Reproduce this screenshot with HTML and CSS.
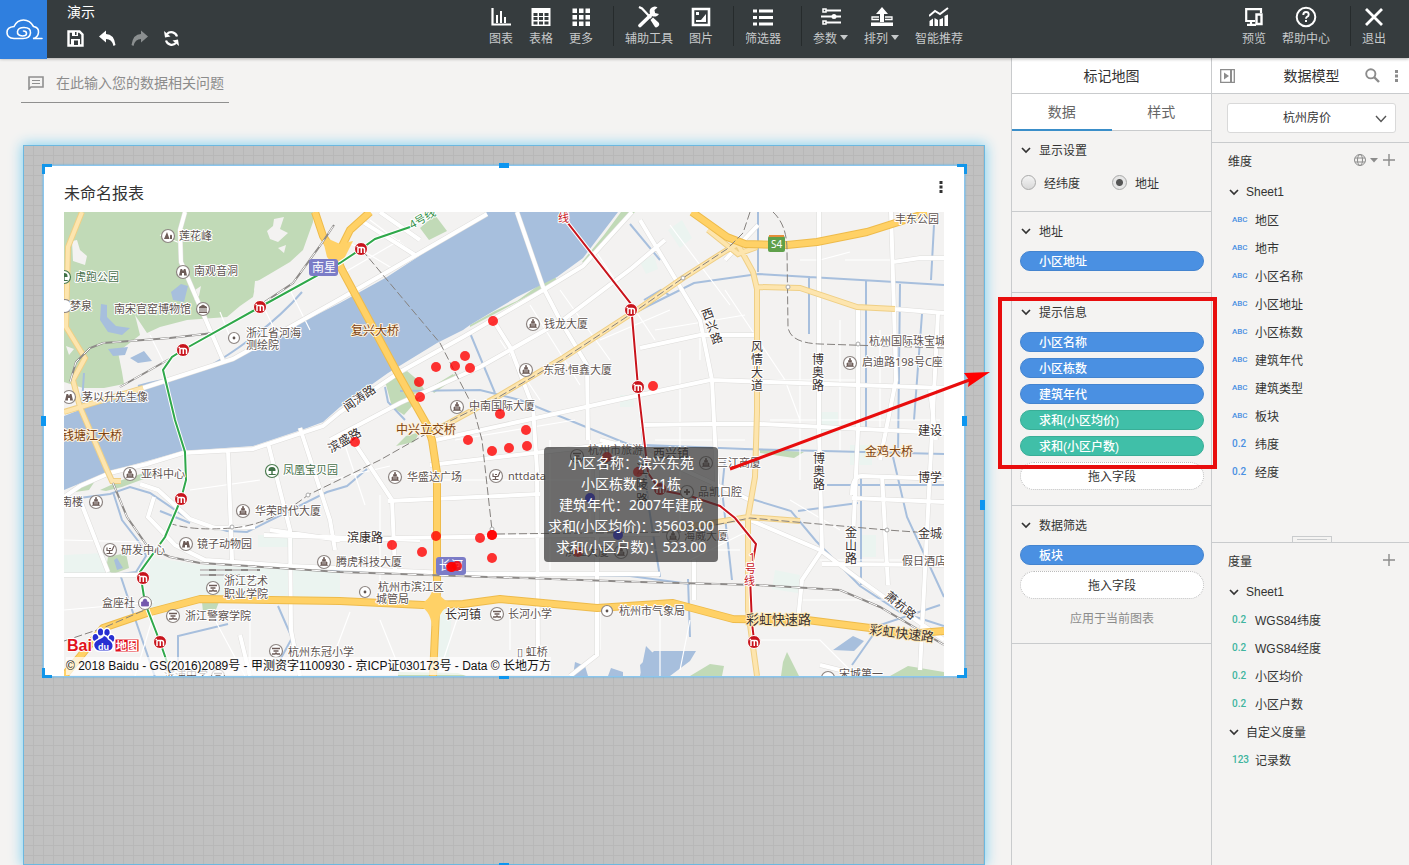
FILE: index.html
```
<!DOCTYPE html>
<html lang="zh-CN">
<head>
	<meta charset="utf-8">
	<title>演示</title>
	<link rel="stylesheet" href="styles.css">
</head>
<body>

<!-- shared icons -->
<svg class="defs" width="0" height="0">
	<symbol id="chev" viewBox="0 0 10 10"><path d="M1 3l4 4 4-4" fill="none" stroke="currentColor" stroke-width="1.7"/></symbol>
	<symbol id="plus" viewBox="0 0 12 12"><path d="M6 0v12M0 6h12" fill="none" stroke="currentColor" stroke-width="1.4"/></symbol>
	<symbol id="metro" viewBox="-7 -7 14 14"><circle r="6.5" fill="#c8141c" stroke="#fff"/><path d="M-3 4V-1.500M-3 -1.500h4.500q2 0 2 2V4M0.300 -1V4M-4.500 -2.500h1.500" fill="none" stroke="#fff" stroke-width="1.500"/></symbol>
	<symbol id="poi" viewBox="-8 -8 16 16"><circle r="6.500" fill="#fff" stroke="#8d8582" stroke-width="1.200"/></symbol>
	<symbol id="tower" viewBox="-8 -8 16 16"><use href="#poi" x="-8" y="-8" width="16" height="16"/><path d="M-4 3.500h8M-3 3V0h1.500v-2.500H-.500V-4.500h1v2h1V0H3v3z" fill="#6d5c58" stroke="#6d5c58" stroke-width=".7"/><path d="M-1 -1v3.500M1 -1v3.500" stroke="#fff" stroke-width=".6"/></symbol>
	<symbol id="school" viewBox="-8 -8 16 16"><use href="#poi" x="-8" y="-8" width="16" height="16"/><path d="M-4 -2.500h8M-2.500 0h5M-4 3h3l1-1 1 1h3" fill="none" stroke="#6d5c58" stroke-width="1.400"/></symbol>
	<symbol id="office" viewBox="-8 -8 16 16"><use href="#poi" x="-8" y="-8" width="16" height="16"/><path d="M-3 -2.500v3h5l2-4.500M-.500 .500v3M-3.500 3.500h6M-1 -1.500h2" fill="none" stroke="#6d5c58" stroke-width="1.200"/></symbol>
	<symbol id="museum" viewBox="-8 -8 16 16"><use href="#poi" x="-8" y="-8" width="16" height="16"/><path d="M-4 -1.500L0 -4l4 2.500zM-4 3.500h8M-3 -1v4M-1 -1v4M1 -1v4M3 -1v4" fill="#6d5c58" stroke="#6d5c58"/></symbol>
	<symbol id="spot" viewBox="-8 -8 16 16"><circle r="5.500" fill="#fff" stroke="#8d8582" stroke-width="1.200"/><circle r="1.400" fill="#5f5450"/></symbol>
	<symbol id="sight" viewBox="-8 -8 16 16"><use href="#poi" x="-8" y="-8" width="16" height="16"/><path d="M-4 3.500L-2.500 -3h1.500l1 2 1-2h1.500L4 3.500H1V1h-2v2.500z" fill="#6d5c58"/></symbol>
	<symbol id="hill" viewBox="-8 -8 16 16"><use href="#poi" x="-8" y="-8" width="16" height="16"/><path d="M-4 3L-1 -4 1.500 3zM2 3V-.500l1-1 1 1V3z" fill="#6d5c58"/></symbol>
	<symbol id="tree" viewBox="-8 -8 16 16"><circle r="6.500" fill="#fff" stroke="#4c7c50" stroke-width="1.200"/><path d="M-3.500 0Q-4 -4 0 -4T3.500 0zM-.700 0h1.400v3h3v1h-7v-1h2.600z" fill="#3f7046"/></symbol>
</svg>

<header class="topbar">
	<div class="brand">
		<a class="logo" href="#" aria-label="首页">
			<svg width="40" height="24" viewBox="0 0 40 24" fill="none" stroke="#fff" stroke-width="1.600" stroke-linecap="round">
				<path d="M38 20.500H29q5-1 5.500-6T29.500 8.500Q26 2 19.500 2T10 8.500Q3 9 3 14.500t7 6h9q7 0 7.500-5.500T20 9.500q-6 0-6.500 4t5 4.500q4 0 4-2.500t-3-2.500"/>
			</svg>
		</a>
		<div class="doc">
			<h1>演示</h1>
			<div class="doc-tools">
				<button type="button" aria-label="保存"><svg width="17" height="17" viewBox="0 0 17 17"><path d="M1.500 1.500h11l3 3v11h-14z" fill="none" stroke="#fff" stroke-width="2.400"/><path d="M4 9h9v7H4zM5 1h6v5H5z" fill="#fff"/><path d="M7 10.500h4V15H7zM8 2h1.500v3H8z" fill="#363c3e"/></svg></button>
				<button type="button" aria-label="撤销"><svg width="17" height="17" viewBox="0 0 17 17"><path d="M0 6.500L7 .500V4q8 0 9.500 11l-2 1Q13 9 7 9v3.500z" fill="#fff"/></svg></button>
				<button type="button" aria-label="重做"><svg width="17" height="17" viewBox="0 0 17 17"><path d="M17 6.500L10 .500V4Q2 4 .500 15l2 1Q4 9 10 9v3.500z" fill="#8b8f90"/></svg></button>
				<button type="button" aria-label="刷新"><svg width="17" height="17" viewBox="0 0 17 17"><path d="M3 10.500A6 6 0 0 0 13 13M14 6.500A6 6 0 0 0 4 4" fill="none" stroke="#fff" stroke-width="2.200"/><path d="M1 1l1 6.500 5.500-1zM16 16l-1-6.500-5.500 1z" fill="#fff"/></svg></button>
			</div>
		</div>
	</div>

	<nav class="tools">
		<div class="tool-group">
			<button type="button"><svg width="20" height="20" viewBox="0 0 20 20"><path d="M1.500 1v16.500H20" fill="none" stroke="#fff" stroke-width="2.200"/><path d="M5 8h2v8H5zM9 4h2v12H9zM13 10h2v6h-2z" fill="#fff"/></svg><span>图表</span></button>
			<button type="button"><svg width="20" height="20" viewBox="0 0 20 20"><path d="M.500 1h19v18H.500z" fill="#fff"/><path d="M2.500 6h4v3h-4zM8 6h4v3H8zM13.500 6h4v3h-4zM2.500 10h4v3h-4zM8 10h4v3H8zM13.500 10h4v3h-4zM2.500 14.500h4v3h-4zM8 14.500h4v3H8zM13.500 14.500h4v3h-4z" fill="#363c3e"/></svg><span>表格</span></button>
			<button type="button"><svg width="20" height="20" viewBox="0 0 20 20"><path d="M1.500 1.500h4.500v4.500h-4.500zM8 1.500h4.500v4.500H8zM14.500 1.500h4.500v4.500h-4.500zM1.500 8h4.500v4.500h-4.500zM8 8h4.500v4.500H8zM14.500 8h4.500v4.500h-4.500zM1.500 14.500h4.500v4.500h-4.500zM8 14.500h4.500v4.500H8zM14.500 14.500h4.500v4.500h-4.500z" fill="#fff"/></svg><span>更多</span></button>
		</div>
		<div class="tool-group">
			<button type="button"><svg width="24" height="22" viewBox="0 0 24 22"><path d="M3 19.500L16 7" stroke="#fff" stroke-width="3.600" stroke-linecap="round"/><path d="M20.500 1.500A5 5 0 1 0 22 8l-4-1-.500-3z" fill="#fff"/><path d="M2 1l3 1.500L14 12" fill="none" stroke="#fff" stroke-width="2.200"/><path d="M13.500 14l2.500-2.500 6 5.500q1 2-1 3.500t-3 .500z" fill="#fff"/></svg><span>辅助工具</span></button>
			<button type="button"><svg width="20" height="20" viewBox="0 0 20 20"><path d="M2 2h16v16H2z" fill="none" stroke="#fff" stroke-width="2.600"/><path d="M5 5h3v3H5zM5 15v-2h5l5-6v8z" fill="#fff"/></svg><span>图片</span></button>
		</div>
		<div class="tool-group">
			<button type="button"><svg width="20" height="20" viewBox="0 0 20 20"><path d="M0 4h4M6 4h14M0 10.500h4M6 10.500h14M0 17h4M6 17h14" stroke="#fff" stroke-width="3.200"/></svg><span>筛选器</span></button>
		</div>
		<div class="tool-group">
			<button type="button"><svg width="20" height="20" viewBox="0 0 20 20"><path d="M5 3.500h15M0 9.500h20M5 15.500h15" stroke="#fff" stroke-width="1.800"/><path d="M2 2h3v3H2zM2 14h3v3H2z" fill="#363c3e" stroke="#fff" stroke-width="1.500"/><circle cx="13" cy="9.500" r="2.500" fill="#fff"/></svg><span class="has-caret">参数</span></button>
			<button type="button"><svg width="22" height="20" viewBox="0 0 22 20"><path d="M11 0l6 7h-4v8H9V7H5zM0 15.500h22V19H0z" fill="#fff"/><path d="M8 10H1v2.500h7M14 10h7v2.500h-7" fill="none" stroke="#fff" stroke-width="1.300"/></svg><span class="has-caret">排列</span></button>
			<button type="button"><svg width="20" height="20" viewBox="0 0 20 20"><path d="M.500 19v-5L4 11.500V19zM5.500 19v-8l3.500 2v6zM10.500 19v-6.500L14 11v8zM15.500 19V9L19 7.500V19z" fill="#fff"/><path d="M0 9l6-5 5 3 8-6" fill="none" stroke="#fff" stroke-width="2"/></svg><span>智能推荐</span></button>
		</div>
	</nav>

	<div class="tools tools-right">
		<div class="tool-group">
			<button type="button"><svg width="20" height="20" viewBox="0 0 20 20"><path d="M17 6V2.200H2.200V14H11M7 14v3.500M3 17.800h9" fill="none" stroke="#fff" stroke-width="2.200"/><path d="M12.500 7.500h5v9.500h-5z" fill="none" stroke="#fff" stroke-width="2.400"/></svg><span>预览</span></button>
			<button type="button"><svg width="22" height="22" viewBox="0 0 22 22"><circle cx="11" cy="11" r="9.300" fill="none" stroke="#fff" stroke-width="2"/><path d="M8.300 9q0-3 2.700-3t2.700 2.400q0 1.600-1.700 2.400-1 .600-1 2" fill="none" stroke="#fff" stroke-width="1.900"/><path d="M10 14h2v2h-2z" fill="#fff"/></svg><span>帮助中心</span></button>
		</div>
		<div class="tool-group">
			<button type="button"><svg width="20" height="20" viewBox="0 0 20 20"><path d="M2 2l16 16M18 2L2 18" stroke="#fff" stroke-width="2.800"/></svg><span>退出</span></button>
		</div>
	</div>
</header>

<div class="workspace">
	<main class="stage">
		<label class="ask">
			<svg width="16" height="14" viewBox="0 0 16 14"><path d="M1 13V1h14v10H3z" fill="none" stroke="#8f8f8f" stroke-width="1.600"/><path d="M4 4.500h8M4 7.500h8" stroke="#8f8f8f" stroke-width="1.200"/></svg>
			<input type="text" placeholder="在此输入您的数据相关问题" aria-label="问题">
		</label>

		<section class="canvas">
			<i class="knob knob-right"></i><i class="knob knob-bottom"></i>
			<article class="card">
				<i class="corner tl"></i><i class="corner tr"></i><i class="corner bl"></i><i class="corner br"></i>
				<i class="knob knob-top"></i><i class="knob knob-right"></i><i class="knob knob-bottom"></i><i class="knob knob-left"></i>
				<div class="card-head">
					<h2>未命名报表</h2>
					<button type="button" class="dots" aria-label="更多操作"><svg width="4" height="12" viewBox="0 0 4 12"><path d="M.500 0h3v3h-3zM.500 4.500h3v3h-3zM.500 9h3v3h-3z" fill="#333"/></svg></button>
				</div>
				<div class="map">
					<svg class="map-svg" viewBox="64 212 880 464" preserveAspectRatio="xMidYMid slice">
						<rect x="64" y="212" width="880" height="464" fill="#f3f2f1"/>

						<!-- pale blocks -->
						<g fill="#ebf4f0">
							<path d="M150 557l50 8 140 7v28H200l-50 8zM64 555l40-2 8 20H64zM258 535h35v12h-35zM440 608h12l-4 60h-14zM668 230l14-10 10 18-12 10zM640 262l14-7 4 14-12 5zM775 570l25 5-2 18-26-4zM818 412h20v22h-20zM862 535h14v22h-14zM620 395h14v12h-14zM850 445h22v20h-22z"/>
						</g>

						<!-- parks -->
						<g fill="#c1dab7">
							<path d="M64 212H313V222L303 250 290 262 268 275 256 282 253 297 240 306 227 317 187 320 160 327 147 333 135 315 140 335 118 352 122 372 124 384 104 388 83 388 64 382z"/>
							<path d="M470 325l25-14 22-10 26-19 12-5 3 5-28 13-60 32zM582 262l22-27 17-23h14l-20 20-28 33zM385 381l22-10 12 10 6 10 28-17 2 6-33 15-18 20-12-8z"/>
							<path d="M100 490l22-10 28-9 10 2-38 14-16 4zM75 492l6-8 14-3-6 9zM106 569l2-12 18-4 3 15-16 6zM202 602h17l-4 10h-12zM396 446l10-10 14-4-6 10zM430 388l25-14 1 4-22 15zM690 676l20-12 14 2-2 10zM783 662l4-10 12 24h-18zM890 676l18-10 36 6v4zM398 672l60 1 8 3h-68zM420 228l15-13 12 16-18 9zM760 449l44 3-10 6-34-5z"/>
						</g>
						<g fill="#f3f2f1">
							<path d="M72 241l5-1 3 10 7 6-2 9-12-4zM274 219l10-2-4 12 8 4-10 9-8-3-3-8 6-5zM278 248l8-3-2 8zM255 281l9-1-4 8-6 3zM195 290l6-4-2 10-5 4zM120 355l22-4-4 14 10 20-22 3zM66 346l8 3-5 6z"/>
						</g>

						<!-- water -->
						<g fill="#a7bfdd">
							<path d="M64 416L100 402 143 389 233 361 300 323 340 303 387 277 487 212H618L583 258 557 277 517 297 470 325 463 330 437 343 388 373 340 407 323 422 307 428 253 446 183 451 147 461 110 471 64 490z"/>
							<path d="M171 292l10-8 7 2-4 16-11-2zM101 304l6 1v12l9 9 14 2-8 7-14-3-8-12zM108 349l20-2-3 8-12 1zM130 358l14-7 8 10-14 2zM114 560l3-2 6 10-6 2z"/>
							<path d="M640 665l14-14 42 0-6 10-20 15h-29zM833 650l20-14 11 5-10 10zM573 676l2-14 10 4 3 10zM608 676l3-8 12 4v4zM640 676l6-30 14 14 8 16z"/>
						</g>
						<g fill="none" stroke="#a7bfdd" stroke-width="2">
							<path d="M64 500l46-6 20-7 20 6 40 27 37 11 20 1 32-16 48-24 20-6 20-17M113 492l9 28 20 26 4 10-10 16-16 2 10 30 26 76M82 403l2-30"/>
							<path d="M138 386q20-6 40-8t60-30 64-56M470 333l25 60M400 391l80-1 40 10 110 45 50 2M385 387l3 15 17 18M644 300l17-10 8 5M660 260l-30-36M640 310l54-27 64-9 120 7 66 4M758 212v60M809 276v58M866 281v150M900 284l-2 170M934 225l-3 55M922 314l-8 106M645 445l100 4 199 5M745 497l46 14 25 30 44 45 40 26 44 14M725 460l-3 30 10 90M640 407l8 95 12 75M688 579l2 58M940 605l-60 20-28 40M798 511l60-8M827 485h117M861 475v110M893 457l14 60 37 80M330 570l300 6 60 8M278 606l14 32-12 22M178 676v-40l50-12M190 523l-30-12"/>
						</g>

						<!-- minor streets -->
						<g fill="none" stroke="#fff" stroke-width="1.200">
							<path d="M64 540l80 2M190 490l70-10M155 610l-20 66M215 620l30 56M64 610l90-8M250 610v66M330 480l60-14M345 445l20 60M380 495v100M415 480h220M550 440v130M590 440v100M455 440l120-20M660 600v76M600 610v40M500 340l40 60M530 305l50 80M560 290l50 70M600 340l70-30M595 250l60 90M650 240l40 60M670 225l60 80M680 350v170M700 310v50M655 330l90-15M655 440h90M770 380h90M800 340v120M770 420h170M840 320v130M880 330v100M820 560h110M800 600h100M790 500l50 30M760 640h60l30 30M690 560l60-30M640 550h100M690 620l-10 50M845 260h100M800 260h20l30-8M725 290l60 90 15 40v60"/>
							<path d="M260 300l15 30M290 290l20 40M220 312l10 25M340 275l60-35M345 240l50 30M370 220l40 30M150 335l15 30M160 235l20 8M380 620l20 50M460 610l-20 60M510 610v40M350 612l-15 40"/>
						</g>

						<!-- white roads -->
						<g class="road-edge">
							<path id="roads" d="M185 212L180 230 181 262 223 360M140 389L233 359 340 299 387 272 487 214M64 497L80 486 110 473 147 464 183 453 253 449 323 426 340 412 400 372 463 337 540 292 583 266 612 234 632 212M330 440L400 403 480 367 563 320 632 268 665 240M517 212L543 287 560 320 587 365 588 440M495 323L510 347 533 407 537 470 538 660M140 484L158 490 190 519 215 528 255 527M300 428L330 520 335 550M228 450L232 560M268 443L290 530 291 630 300 676M154 497L148 517 175 545 205 560 290 566 470 574 660 574M64 575L145 575M80 500L108 572M346 430L392 500 395 570M330 539L660 534M388 501L540 494M430 465L620 443M436 440L640 395 710 380 944 388M640 348L700 335 757 335M597 470V610L597 655 570 676M640 220L700 320 712 380 718 500M758 225L725 260M819 212V430L822 550 802 580 798 620M891 212L894 310 896 380 880 460M858 310V430L853 540M893 262L920 258H944M895 309L944 313M938 313L920 670M750 500L640 450 600 440M750 520L820 550 860 580 944 640M640 425L710 424 760 424 944 433M694 560V600M852 495Q852 476 862 476L944 479M852 498L944 502M882 475L888 585M936 440L930 390M822 564L944 565M380 212L420 240M360 220L415 255M270 530L340 540M264 535L420 540M820 665L860 675M240 635L250 676"/>
						</g>
						<use href="#roads" class="road-white"/>

						<!-- light yellow roads -->
						<g fill="none" stroke="#efcf85" stroke-width="6">
							<path id="lights" d="M82 212L68 247 66 327 85 358 73 380 80 407 107 470 112 481H121M64 412L143 388M440 428L497 397 563 358 640 308 683 278 727 250 740 243M737 243L753 272 757 289V412L755 477 748 517V610L757 676M757 287L800 288 857 307 895 309M680 528L748 517 800 521M708 230L738 254 757 247"/>
						</g>
						<use href="#lights" fill="none" stroke="#fde5ae" stroke-width="4"/>

						<!-- expressways -->
						<g fill="none" stroke="#eebb4b" stroke-width="8" stroke-linejoin="round">
							<path id="yellows" d="M315 212L323 236 336 256 342 270 397 372 427 425 432 440 437 473V590L433 676M370 212L350 230 340 250M64 676L83 653 103 628 147 613 200 599 340 601 423 605 463 604 500 599 597 608 673 603 733 619 807 620 870 628 907 634 944 631M692 212L727 237 745 244 787 245 817 242 867 232 927 213"/>
						</g>
						<use href="#yellows" fill="none" stroke="#ffd166" stroke-width="6" stroke-linejoin="round"/>
						<path d="M322 236l18 8 13-3-8 16-8 12-10-12zM437 588q2 12 18 16-15 2-18 22h-5q-2-18-16-21 14-3 17-17z" fill="#ffd166"/>

						<!-- railways -->
						<g fill="none" stroke="#8d8a88" stroke-width="2">
							<path id="rails" d="M113 483L127 517 148 547 170 557 200 563 340 572 640 582 757 585 840 590 880 607 944 645M70 382L76 362 90 348 103 343 170 338 213 333 250 312 293 283 322 243 334 225M120 387L173 357M200 570H260M200 575H240"/>
						</g>
						<use href="#rails" fill="none" stroke="#fff" stroke-width="1" stroke-dasharray="9 7"/>
						<g fill="none" stroke="#85817e" stroke-width="1" stroke-dasharray="8 3">
							<path d="M362 250L440 343 473 407 482 440 492 530M497 534L680 532 750 518 887 530 944 534M750 212L743 233 727 249 683 278 640 308 563 359 497 398 440 426 380 460 308 495Q270 525 232 528T172 524M773 212Q787 225 787 250L788 327Q790 343 820 344L944 348M64 641L103 628 147 609"/>
						</g>
						<g fill="#fff" stroke="#aaa"><circle cx="308" cy="495" r="2"/><circle cx="232" cy="527" r="2"/><circle cx="683" cy="278" r="2"/><circle cx="788" cy="287" r="2"/><circle cx="858" cy="344" r="2"/><circle cx="887" cy="530" r="2"/><circle cx="492" cy="529" r="2"/></g>

						<!-- metro lines -->
						<g fill="none" stroke="#fff" stroke-width="4">
							<path id="line4" d="M413 226L375 239 361 249 340 263 260 307 183 350 172 357 163 370 175 420 185 452 186 480 181 499 165 537 140 572 145 603 160 642 167 662"/>
							<path id="line1" d="M560 213L631 304 638 387 645 447 648 473 660 490 690 496 720 506 735 518 756 544 750 577 752 623 754 640"/>
						</g>
						<use href="#line4" fill="none" stroke="#2fa84a" stroke-width="2"/>
						<use href="#line1" fill="none" stroke="#c8141c" stroke-width="2"/>
						<g>
							<use href="#metro" x="354" y="242" width="14" height="14"/><use href="#metro" x="253" y="300" width="14" height="14"/><use href="#metro" x="176" y="343" width="14" height="14"/><use href="#metro" x="174" y="492" width="14" height="14"/><use href="#metro" x="136" y="571" width="14" height="14"/><use href="#metro" x="153" y="635" width="14" height="14"/><use href="#metro" x="624" y="303" width="14" height="14"/><use href="#metro" x="631" y="380" width="14" height="14"/><use href="#metro" x="653" y="482" width="14" height="14"/><use href="#metro" x="747" y="635" width="14" height="14"/>
						</g>

						<!-- place icons -->
						<g>
							<use href="#hill" x="160" y="228" width="16" height="16"/><use href="#sight" x="175" y="264" width="16" height="16"/><use href="#tree" x="56" y="269" width="16" height="16"/><use href="#poi" x="57" y="298" width="16" height="16"/><use href="#museum" x="195" y="301" width="16" height="16"/><use href="#spot" x="226" y="330" width="16" height="16"/><use href="#sight" x="61" y="389" width="16" height="16"/>
							<use href="#tower" x="122" y="466" width="16" height="16"/><use href="#tower" x="88" y="494" width="16" height="16"/><use href="#tree" x="264" y="463" width="16" height="16"/><use href="#tower" x="235" y="503" width="16" height="16"/><use href="#sight" x="178" y="536" width="16" height="16"/><use href="#office" x="102" y="542" width="16" height="16"/><use href="#school" x="205" y="580" width="16" height="16"/><use href="#school" x="165" y="608" width="16" height="16"/><use href="#school" x="268" y="643" width="16" height="16"/>
							<use href="#tower" x="316" y="554" width="16" height="16"/><use href="#spot" x="357" y="584" width="16" height="16"/><use href="#tower" x="387" y="469" width="16" height="16"/><use href="#office" x="488" y="468" width="16" height="16"/><use href="#tower" x="449" y="399" width="16" height="16"/><use href="#tower" x="518" y="362" width="16" height="16"/><use href="#tower" x="525" y="316" width="16" height="16"/><use href="#school" x="489" y="606" width="16" height="16"/><use href="#spot" x="599" y="603" width="16" height="16"/>
							<use href="#tower" x="842" y="355" width="16" height="16"/><use href="#tower" x="698" y="455" width="16" height="16"/><use href="#school" x="569" y="448" width="16" height="16"/><use href="#poi" x="679" y="484" width="16" height="16"/><path d="M687 489v6M684 492h6" stroke="#6d5c58" stroke-width="2"/><use href="#tower" x="665" y="528" width="16" height="16"/><use href="#tower" x="613" y="544" width="16" height="16"/><use href="#school" x="210" y="668" width="16" height="16"/><use href="#poi" x="820" y="670" width="16" height="16"/>
							<circle cx="145" cy="603" r="6.500" fill="#fff" stroke="#8d8582"/><path d="M141.500 602h7v4h-7zM143 602q0-3 2-3t2 3" fill="#7459ad" stroke="#7459ad" stroke-width=".8"/>
						</g>

						<!-- place names -->
						<g class="place">
							<text x="179" y="240">莲花峰</text>
							<text x="194" y="275">南观音洞</text>
							<text x="75" y="281" class="green">虎跑公园</text>
							<text x="70" y="310">梦泉</text>
							<text x="114" y="313">南宋官窑博物馆</text>
							<text x="246" y="337">浙江省河海</text><text x="246" y="349">测绘院</text>
							<text x="82" y="401">茅以升先生像</text>
							<text x="141" y="478">亚科中心</text>
							<text x="61" y="506">南楼</text>
							<text x="283" y="474" class="green">凤凰宝贝园</text>
							<text x="255" y="515">华荣时代大厦</text>
							<text x="197" y="548">镜子动物园</text>
							<text x="121" y="554">研发中心</text>
							<text x="224" y="585">浙江艺术</text><text x="224" y="598">职业学院</text>
							<text x="102" y="607">盒座社</text>
							<text x="185" y="620">浙江警察学院</text>
							<text x="288" y="656">杭州东冠小学</text>
							<text x="164" y="679">滨浦中学</text>
							<text x="336" y="566">腾虎科技大厦</text>
							<text x="378" y="591">杭州市滨江区</text><text x="376" y="603">城管局</text>
							<text x="407" y="481">华盛达广场</text>
							<text x="508" y="480">nttdata</text>
							<text x="469" y="410">中南国际大厦</text>
							<text x="543" y="374">东冠·恒鑫大厦</text>
							<text x="544" y="328">钱龙大厦</text>
							<text x="508" y="618">长河小学</text>
							<text x="517" y="656">▯ 虹桥</text>
							<text x="619" y="615">杭州市气象局</text>
							<text x="895" y="223">丰东公园</text>
							<text x="869" y="345">杭州国际珠宝城</text>
							<text x="862" y="366">启迪路198号C座</text>
							<text x="717" y="467">三江商厦</text>
							<text x="698" y="496">品凯口腔</text>
							<text x="684" y="540">海威大厦</text>
							<text x="588" y="454">杭州市旅游</text><text x="600" y="467">学校</text>
							<text x="565" y="556">滨江大厦</text>
							<text x="902" y="565">假日酒店</text>
							<text x="839" y="678">宋城第一</text>
						</g>
						<g class="road-name">
							<text x="918" y="435">建设</text>
							<text x="918" y="482">博学</text>
							<text x="918" y="538">金城</text>
							<text x="347" y="542">滨康路</text>
							<text x="445" y="619">长河镇</text>
							<text x="653" y="458">西兴镇</text>
							<text x="347" y="412" transform="rotate(-35 347 412)">闻涛路</text>
							<text x="331" y="453" transform="rotate(-30 331 453)">滨盛路</text>
							<text y="320" transform="rotate(-20 703 316)"><tspan x="702">西</tspan><tspan x="702" dy="13">兴</tspan><tspan x="702" dy="13">路</tspan></text>
							<text y="351"><tspan x="751">风</tspan><tspan x="751" dy="13">情</tspan><tspan x="751" dy="13">大</tspan><tspan x="751" dy="13">道</tspan></text>
							<text y="364"><tspan x="812">博</tspan><tspan x="812" dy="13">奥</tspan><tspan x="812" dy="13">路</tspan></text>
							<text y="463"><tspan x="813">博</tspan><tspan x="813" dy="13">奥</tspan><tspan x="813" dy="13">路</tspan></text>
							<text y="537"><tspan x="845">金</tspan><tspan x="845" dy="13">山</tspan><tspan x="845" dy="13">路</tspan></text>
							<text y="474"><tspan x="636">江</tspan><tspan x="636" dy="15">陵</tspan><tspan x="636" dy="15">路</tspan></text>
							<text x="884" y="597" transform="rotate(40 884 597)">萧杭路</text>
						</g>
						<g class="road-name warm">
							<text x="746" y="624">彩虹快速路</text>
							<text x="869" y="634" transform="rotate(7 869 634)">彩虹快速路</text>
						</g>
						<g class="bridge">
							<text x="351" y="335">复兴大桥</text>
							<text x="396" y="434">中兴立交桥</text>
							<text x="62" y="440">钱塘江大桥</text>
							<text x="865" y="456">金鸡大桥</text>
						</g>
						<text class="line-name" fill="#2f8f46" x="412" y="229" transform="rotate(-30 412 229)">4号线</text>
						<text class="line-name" fill="#c8141c" x="558" y="222">线</text>
						<text class="line-name" fill="#c8141c" y="561"><tspan x="749">1</tspan><tspan x="745" dy="12">号</tspan><tspan x="744" dy="12">线</tspan></text>

						<g class="tag">
							<rect x="309" y="259" width="29" height="17" rx="3" fill="#7b7cc7"/><text x="312" y="272">南星</text>
							<rect x="436" y="557" width="30" height="18" rx="3" fill="#7b7cc7"/><text x="439" y="570">长河</text>
							<rect x="768" y="236" width="17" height="16" rx="2" fill="#5fa04a"/><path d="M769 235h15v2h-15z" fill="#e58f3a"/><text x="771" y="248" class="s4">S4</text>
						</g>

						<!-- data points -->
						<g fill="#f00" fill-opacity=".8">
							<circle cx="493" cy="321" r="5"/><circle cx="465" cy="356" r="5"/><circle cx="436" cy="367" r="5"/><circle cx="455" cy="366" r="5"/><circle cx="470" cy="368" r="5"/><circle cx="419" cy="382" r="5"/><circle cx="420" cy="397" r="5"/><circle cx="500" cy="414" r="5"/><circle cx="526" cy="430" r="5"/><circle cx="468" cy="440" r="5"/><circle cx="492" cy="451" r="5"/><circle cx="509" cy="448" r="5"/><circle cx="527" cy="446" r="5"/><circle cx="355" cy="442" r="5"/><circle cx="653" cy="386" r="5"/><circle cx="392" cy="545" r="5"/><circle cx="422" cy="552" r="5"/><circle cx="436" cy="536" r="5"/><circle cx="480" cy="538" r="5"/><circle cx="492" cy="535" r="5"/><circle cx="492" cy="535" r="5"/><circle cx="492" cy="558" r="5"/><circle cx="451" cy="567" r="5"/><circle cx="452" cy="567" r="5"/><circle cx="457" cy="566" r="5"/><circle cx="607" cy="457" r="5"/><circle cx="638" cy="472" r="5"/><circle cx="578" cy="552" r="5"/>
						</g>
						<g fill="#22f" fill-opacity=".9"><circle cx="590" cy="498" r="5"/><circle cx="618" cy="535" r="5"/></g>

						<!-- provider logo -->
						<g class="provider">
							<text x="67" y="651">Bai</text>
							<g fill="#2730d2" stroke="#fff" stroke-width="3" paint-order="stroke">
								<ellipse cx="95.500" cy="637.500" rx="2.800" ry="3.500"/><ellipse cx="100.500" cy="632" rx="2.600" ry="3.500"/><ellipse cx="107" cy="632.500" rx="2.600" ry="3.500"/><ellipse cx="111.500" cy="638.500" rx="2.800" ry="3.500"/><path d="M103.500 636q3 0 4.500 3.500 5 3 4.500 7t-5 4-8 0-5-4 4.500-7 4.500-3.500z"/>
							</g>
							<text x="98" y="650" class="du">du</text>
							<rect x="115" y="639" width="24" height="13" fill="#e1131c" stroke="#fff"/>
							<text x="116" y="650" class="ditu">地图</text>
						</g>
					</svg>
					<small class="copyright">© 2018 Baidu - GS(2016)2089号 - 甲测资字1100930 - 京ICP证030173号 - Data © 长地万方</small>
					<div class="tip" role="tooltip">
						<div>小区名称：滨兴东苑</div>
						<div>小区栋数：21栋</div>
						<div>建筑年代：2007年建成</div>
						<div>求和(小区均价)：35603.00</div>
						<div>求和(小区户数)：523.00</div>
					</div>
				</div>
			</article>
		</section>

		<svg class="arrow" width="264" height="102" viewBox="728 370 264 102"><path d="M730 469L972 379" stroke="#e80d0d" stroke-width="3"/><path d="M990 372l-26 1 5 7-1 7z" fill="#f00"/></svg>
	</main>

	<aside class="panel">
		<h3 class="panel-title">标记地图</h3>
		<div class="tabs">
			<button type="button" class="active">数据</button>
			<button type="button">样式</button>
		</div>
		<section class="group">
			<h4><svg width="10" height="10"><use href="#chev"/></svg>显示设置</h4>
			<div class="radios">
				<label><input type="radio" name="pos">经纬度</label>
				<label><input type="radio" name="pos" checked>地址</label>
			</div>
		</section>
		<section class="group">
			<h4><svg width="10" height="10"><use href="#chev"/></svg>地址</h4>
			<div class="pill">小区地址</div>
		</section>
		<section class="group">
			<h4><svg width="10" height="10"><use href="#chev"/></svg>提示信息</h4>
			<div class="pill">小区名称</div>
			<div class="pill">小区栋数</div>
			<div class="pill">建筑年代</div>
			<div class="pill measure">求和(小区均价)</div>
			<div class="pill measure">求和(小区户数)</div>
			<div class="drop">拖入字段</div>
			<div class="marker"></div>
		</section>
		<section class="group">
			<h4><svg width="10" height="10"><use href="#chev"/></svg>数据筛选</h4>
			<div class="pill">板块</div>
			<div class="drop">拖入字段</div>
			<p class="scope">应用于当前图表</p>
		</section>
	</aside>

	<aside class="panel model">
		<div class="panel-title model-title">
			<button type="button" aria-label="收起"><svg width="15" height="14" viewBox="0 0 15 14"><path d="M.700 .700h13.600v12.600H.700z" fill="none" stroke="#8c8c8c" stroke-width="1.300"/><path d="M4 3.500v7L9 7z" fill="#8c8c8c"/><path d="M10 1h2v12h-2z" fill="#8c8c8c"/></svg></button>
			<h3>数据模型</h3>
			<button type="button" aria-label="搜索"><svg width="15" height="15" viewBox="0 0 15 15" fill="none" stroke="#8c8c8c"><circle cx="5.800" cy="5.800" r="4.600" stroke-width="1.900"/><path d="M9 9l5 5" stroke-width="2.400"/></svg></button>
			<button type="button" aria-label="更多"><svg width="3" height="12" viewBox="0 0 3 12"><path d="M0 0h3v3H0zM0 4.500h3v3H0zM0 9h3v3H0z" fill="#8c8c8c"/></svg></button>
		</div>
		<div class="source">
			<select aria-label="数据模型"><option>杭州房价</option></select>
			<svg width="12" height="8" viewBox="0 0 12 8"><path d="M1 1l5 5.500L11 1" fill="none" stroke="#555" stroke-width="1.400"/></svg>
		</div>
		<section class="fields dims">
			<div class="fields-head">
				<h4>维度</h4>
				<button type="button" aria-label="地理"><svg width="24" height="12" viewBox="0 0 24 12"><g fill="none" stroke="#8c8c8c"><circle cx="6" cy="6" r="5.500"/><ellipse cx="6" cy="6" rx="2.500" ry="5.500"/><path d="M1 4h10M1 8h10"/></g><path d="M16 4h8l-4 4.500z" fill="#8c8c8c"/></svg></button>
				<button type="button" aria-label="添加维度"><svg width="12" height="12"><use href="#plus"/></svg></button>
			</div>
			<ul>
				<li class="sheet"><svg width="10" height="10"><use href="#chev"/></svg>Sheet1</li>
				<li><i>ABC</i>地区</li>
				<li><i>ABC</i>地市</li>
				<li><i>ABC</i>小区名称</li>
				<li><i>ABC</i>小区地址</li>
				<li><i>ABC</i>小区栋数</li>
				<li><i>ABC</i>建筑年代</li>
				<li><i>ABC</i>建筑类型</li>
				<li><i>ABC</i>板块</li>
				<li><i class="num">0.2</i>纬度</li>
				<li><i class="num">0.2</i>经度</li>
			</ul>
			<div class="grip"></div>
		</section>
		<section class="fields measures">
			<div class="fields-head">
				<h4>度量</h4>
				<button type="button" aria-label="添加度量"><svg width="12" height="12"><use href="#plus"/></svg></button>
			</div>
			<ul>
				<li class="sheet"><svg width="10" height="10"><use href="#chev"/></svg>Sheet1</li>
				<li><i class="num">0.2</i>WGS84纬度</li>
				<li><i class="num">0.2</i>WGS84经度</li>
				<li><i class="num">0.2</i>小区均价</li>
				<li><i class="num">0.2</i>小区户数</li>
				<li class="sheet"><svg width="10" height="10"><use href="#chev"/></svg>自定义度量</li>
				<li><i class="num">123</i>记录数</li>
			</ul>
		</section>
	</aside>
</div>

</body>
</html>
```
FILE: styles.css
```
* {
	box-sizing: border-box;
}

html, body {
	height: 100%;
}

body {
	margin: 0;
	display: flex;
	flex-direction: column;
	overflow: hidden;
	font-family: "Liberation Sans", "Noto Sans CJK SC", sans-serif;
	font-size: 12px;
	color: #333;
	background: #f4f3f2;
}

h1, h2, h3, h4, p, ul {
	margin: 0;
	padding: 0;
	font-weight: normal;
	font-size: inherit;
}

ul {
	list-style: none;
}

button {
	padding: 0;
	border: 0;
	background: none;
	font: inherit;
	color: inherit;
	cursor: pointer;
}

svg {
	display: block;
	flex: none;
}

.defs {
	position: absolute;
}

/* top bar */
.topbar {
	display: flex;
	flex: none;
	height: 58px;
	background: #363c3e;
	box-shadow: 0 1px 3px rgba(0, 0, 0, 0.3);
	position: relative;
	z-index: 2;
}

.brand {
	display: flex;
	width: 210px;
}

.logo {
	display: flex;
	align-items: center;
	justify-content: center;
	width: 47px;
	height: 59px;
	background: #2f7fdf;
}

.doc {
	padding: 2px 0 0 20px;
	color: #fff;
}

.doc h1 {
	font-size: 14px;
	line-height: 20px;
}

.doc-tools {
	display: flex;
	gap: 15px;
	padding-top: 8px;
}

.tools {
	display: flex;
	flex: 1;
	justify-content: center;
	padding-top: 6px;
	color: #c6c9ca;
}

.tools-right {
	flex: none;
	padding-right: 23px;
}

.tool-group {
	display: flex;
	gap: 16px;
	height: 40px;
	padding: 0 20px 0 11px;
	border-right: 1px solid #262b2c;
}

.tool-group:first-child {
	padding-left: 0;
}

.tools .tool-group:last-child {
	padding-right: 0;
	border-right: 0;
}

.tool-group button {
	display: flex;
	flex-direction: column;
	align-items: center;
}

.tool-group svg {
	height: 22px;
}

.tool-group span {
	line-height: 18px;
	margin-top: 2px;
}

.has-caret {
	display: flex;
	gap: 3px;
}

.has-caret::after {
	content: "";
	margin-top: 5px;
	height: 0;
	border: 4px solid transparent;
	border-top: 5px solid #c6c9ca;
	border-bottom: 0;
}

/* stage */
.workspace {
	display: flex;
	flex: 1;
	min-height: 0;
}

.stage {
	display: flex;
	flex-direction: column;
	flex: 1;
	min-width: 0;
	position: relative;
}

.ask {
	display: flex;
	align-items: center;
	gap: 12px;
	width: 208px;
	height: 45px;
	margin: 0 0 42px 21px;
	padding: 6px 0 0 7px;
	border-bottom: 1px solid #8f8f8f;
}

.ask input {
	flex: 1;
	min-width: 0;
	padding: 0;
	border: 0;
	outline: 0;
	background: none;
	font: inherit;
	font-size: 14px;
}

.ask input::placeholder {
	color: #8c8c8c;
}

.canvas {
	flex: 1;
	min-height: 0;
	margin: 0 26px 0 23px;
	padding: 19px;
	border: 1px solid #6cb8df;
	background-color: #c1c1c1;
	background-image:
		linear-gradient(to right, transparent 9px, #b8b8b8 9px),
		linear-gradient(to bottom, transparent 9px, #b8b8b8 9px);
	background-size: 10px 10px;
	box-shadow: 0 0 12px 1px #85d2f0;
	position: relative;
}

.card {
	position: relative;
	padding: 0 20px;
	border: 1px solid #8ac6ee;
	background: #fff;
	box-shadow: 0 0 2px #4fb0ee;
}

.card-head {
	display: flex;
	align-items: center;
	justify-content: space-between;
	height: 46px;
	padding-top: 10px;
}

.card-head h2 {
	font-size: 16px;
	line-height: 24px;
}

.dots {
	padding: 0 1px 14px 0;
}

/* selection handles */
.corner {
	position: absolute;
	width: 10px;
	height: 10px;
	border: 0 solid #1296ea;
}

.tl { left: -2px; top: -2px; border-width: 3px 0 0 3px; }
.tr { right: -3px; top: -2px; border-width: 3px 3px 0 0; }
.bl { left: -2px; bottom: -2px; border-width: 0 0 3px 3px; }
.br { right: -3px; bottom: -2px; border-width: 0 3px 3px 0; }

.knob {
	position: absolute;
	width: 5px;
	height: 10px;
	background: #0d96f0;
}

.knob-left, .knob-right { top: 50%; margin-top: -5px; }
.knob-left { left: -3px; }
.knob-right { right: -3px; }
.knob-top, .knob-bottom { left: 50%; width: 10px; height: 5px; margin-left: -5px; }
.knob-top { top: -3px; }
.knob-bottom { bottom: -3px; }

.canvas > .knob-right { right: -1px; }
.canvas > .knob-bottom { bottom: -1px; height: 2px; }

/* map */
.map {
	position: relative;
	height: 464px;
	overflow: hidden;
}

.map-svg {
	width: 100%;
	height: 100%;
	font-family: "Noto Sans", "Noto Sans CJK SC", sans-serif;
}

.road-edge {
	fill: none;
	stroke: #dedddb;
	stroke-width: 5px;
}

.road-white {
	fill: none;
	stroke: #fff;
	stroke-width: 4px;
}

.map-svg text {
	paint-order: stroke;
	stroke: #fff;
	stroke-width: 2px;
	stroke-linejoin: round;
}

.place {
	font-size: 11px;
	fill: #5d5350;
}

.place .green {
	fill: #47704a;
}

.road-name {
	font-size: 12px;
	fill: #38302e;
}

.road-name.warm text {
	stroke: #ffe9b5;
	font-size: 13px;
}

.bridge {
	font-size: 12px;
	fill: #7d4310;
}

.bridge text {
	stroke: #fff2dc;
}

.line-name {
	font-size: 11px;
}

.tag {
	font-size: 12px;
	fill: #fff;
}

.map-svg .tag text {
	stroke: none;
}

.tag .s4 {
	font-size: 10px;
}

.provider {
	font-family: "Liberation Sans", "Noto Sans CJK SC", sans-serif;
	font-size: 16px;
	font-weight: bold;
	fill: #e1131c;
}

.map-svg .provider .du {
	font-size: 9px;
	fill: #fff;
	stroke: none;
}

.map-svg .provider .ditu {
	font-size: 11px;
	fill: #fff;
	stroke: none;
}

.copyright {
	position: absolute;
	left: 2px;
	bottom: 1px;
	font-size: 12px;
	line-height: 18px;
	color: #111;
	background: rgba(255, 255, 255, 0.7);
}

.tip {
	position: absolute;
	left: 480px;
	top: 235px;
	padding: 5px 4px;
	border-radius: 4px;
	background: rgba(50, 50, 50, 0.7);
	color: #fff;
	font-family: "Noto Sans", "Noto Sans CJK SC", sans-serif;
	font-size: 14px;
	line-height: 21px;
	text-align: center;
	white-space: nowrap;
}

.arrow {
	position: absolute;
	left: 728px;
	top: 312px;
}

/* side panels */
.panel {
	flex: none;
	width: 200px;
	border-left: 1px solid #c9cbcd;
}

.panel-title {
	height: 36px;
	border-bottom: 1px solid #c9cbcd;
	background: #fff;
	font-size: 14px;
	line-height: 36px;
	text-align: center;
}

.tabs {
	display: flex;
	height: 37px;
	border-bottom: 1px solid #c9cbcd;
	background: #fff;
}

.tabs button {
	flex: 1;
	height: 37px;
	padding-bottom: 2px;
	border-bottom: 2px solid transparent;
	font-size: 14px;
	color: #666;
}

.tabs .active {
	border-bottom-color: #3a8ec9;
}

.group {
	position: relative;
	padding: 0 7px 15px 8px;
	border-bottom: 1px solid #c9cbcd;
}

.group h4 {
	display: flex;
	align-items: center;
	gap: 8px;
	height: 39px;
	padding: 0 0 2px 1px;
}

.radios {
	display: flex;
	height: 26px;
}

.radios label {
	display: flex;
	align-items: center;
	gap: 8px;
	width: 91px;
	padding: 0 0 1px 1px;
}

.radios input {
	width: 15px;
	height: 15px;
	margin: 0;
	appearance: none;
	border: 1px solid #a9a9a9;
	border-radius: 50%;
	background: linear-gradient(#f4f4f4, #d8d8d8);
}

.radios input:checked {
	background: radial-gradient(circle, #555 3px, #e6e6e6 4px);
}

.pill {
	height: 20px;
	margin-bottom: 6px;
	padding-left: 18px;
	border: 1px solid #4484cf;
	border-radius: 10px;
	background: #4a90e2;
	color: #fff;
	font-weight: 500;
	line-height: 20px;
}

.pill.measure {
	border-color: #39ae97;
	background: #40bfa8;
}

.drop {
	height: 28px;
	border: 1px dotted #bbb;
	border-radius: 14px;
	background: #fff;
	line-height: 28px;
	text-align: center;
}

.scope {
	margin-top: 10px;
	line-height: 21px;
	height: 19px;
	text-align: center;
	color: #8c8c8c;
}

.marker {
	position: absolute;
	left: -14px;
	right: -6px;
	top: 4px;
	height: 172px;
	border: 4px solid #e80d0d;
	z-index: 1;
}

/* data model */
.model {
	width: 198px;
}

.model-title {
	display: flex;
	align-items: center;
	padding: 0 11px 0 8px;
}

.model-title h3 {
	flex: 1;
	padding-left: 23px;
}

.model-title button + button {
	margin-left: 15px;
}

.source {
	position: relative;
	height: 49px;
	padding: 9px 13px 0 15px;
	border-bottom: 1px solid #c9cbcd;
}

.source select {
	display: block;
	width: 100%;
	height: 30px;
	padding: 0 9px 0 0;
	appearance: none;
	border: 1px solid #d9d9d9;
	border-radius: 3px;
	background: #fff;
	font: inherit;
	color: #333;
	text-align-last: center;
}

.source svg {
	position: absolute;
	right: 22px;
	top: 21px;
	pointer-events: none;
}

.fields {
	position: relative;
}

.dims {
	height: 400px;
	border-bottom: 1px solid #c9cbcd;
}

.fields-head {
	display: flex;
	align-items: center;
	gap: 5px;
	height: 35px;
	padding: 0 14px 1px 16px;
	color: #8c8c8c;
}

.fields-head h4 {
	flex: 1;
	color: #333;
}

.fields li {
	display: flex;
	align-items: center;
	height: 28px;
	padding: 0 0 1px 20px;
}

.fields li.sheet {
	gap: 7px;
	padding-left: 17px;
}

.fields li i {
	width: 23px;
	font-family: Roboto, sans-serif;
	font-size: 8px;
	font-style: normal;
	font-weight: 500;
	color: #4a90e2;
}

.fields li .num {
	font-size: 10px;
}

.measures li .num {
	color: #40b59f;
}

.grip {
	position: absolute;
	left: 50%;
	bottom: 0;
	width: 40px;
	height: 6px;
	margin-left: -19px;
	border: 1px solid #c9cbcd;
	border-bottom: 0;
}

.grip::after {
	content: "";
	display: block;
	margin: 2px 4px 0;
	border-top: 1px solid #c9cbcd;
}
```
